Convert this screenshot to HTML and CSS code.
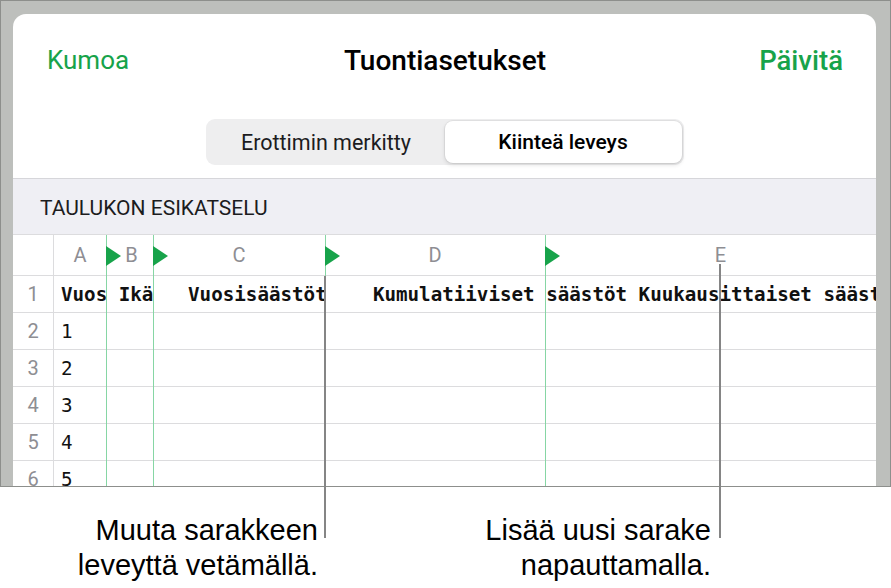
FILE: index.html
```html
<!doctype html>
<html lang="fi">
<head>
  <meta charset="utf-8">
  <title>Tuontiasetukset</title>
  <link rel="stylesheet" href="styles.css">
</head>
<body>
  <div class="page">
    <div class="device">
      <div class="sheet">
        <header class="nav">
          <span class="nav-btn">Kumoa</span>
          <h1 class="nav-title">Tuontiasetukset</h1>
          <span class="nav-btn done">Päivitä</span>
        </header>
        <div class="seg-wrap">
          <div class="segmented">
            <button class="seg">Erottimin merkitty</button>
            <button class="seg active">Kiinteä leveys</button>
          </div>
        </div>
        <div class="section-head">TAULUKON ESIKATSELU</div>
        <div class="preview">
          <div class="row head">
            <div class="num"></div>
            <div class="letters">
              <span class="col col-a">A</span>
              <span class="col col-b">B</span>
              <span class="col col-c">C</span>
              <span class="col col-d">D</span>
              <span class="col col-e">E</span>
            </div>
          </div>
          <div class="row"><div class="num">1</div><div class="text bold">Vuos Ikä   Vuosisäästöt    Kumulatiiviset säästöt Kuukausittaiset säästöt</div></div>
          <div class="row"><div class="num">2</div><div class="text">1</div></div>
          <div class="row"><div class="num">3</div><div class="text">2</div></div>
          <div class="row"><div class="num">4</div><div class="text">3</div></div>
          <div class="row"><div class="num">5</div><div class="text">4</div></div>
          <div class="row"><div class="num">6</div><div class="text">5</div></div>
          <!-- column breaks -->
          <span class="marker m1"></span>
          <span class="marker m2"></span>
          <span class="marker m3"></span>
          <span class="marker m4"></span>
        </div>
      </div>
    </div>
    <div class="notes">
      <p class="note note-drag">Muuta sarakkeen<br>leveyttä vetämällä.</p>
      <p class="note note-add">Lisää uusi sarake<br>napauttamalla.</p>
    </div>
    <span class="leader leader-drag"></span>
    <span class="leader leader-add"></span>
  </div>
</body>
</html>
```

FILE: styles.css
```css
:root {
  --green: #17a34a;
  --frame: #bdbfbc;
  --grid: #dcdcde;
  --muted: #8e8e93;
  --mono: 'DejaVu Sans Mono', 'Liberation Mono', monospace;
}
* { box-sizing: border-box; margin: 0; padding: 0; }
body {
  background: #fff;
  font-family: Roboto, 'Liberation Sans', sans-serif;
  color: #111;
}
.page {
  position: relative;
  width: 891px;
  height: 588px;
  overflow: hidden;
}
/* Device frame */
.device {
  background: var(--frame);
  border: 1px solid #8d8f8c;
  padding: 13px 14px 0 12px;
}
.sheet {
  background: #fff;
  height: 472px;
  border-radius: 13px 13px 0 0;
  overflow: hidden;
  display: flex;
  flex-direction: column;
}
/* Nav bar */
.nav {
  height: 92px;
  display: grid;
  grid-template-columns: 1fr auto 1fr;
  align-items: center;
  padding: 0 33px 0 34px;
}
.nav-btn {
  font-size: 26px;
  color: var(--green);
}
.nav-btn.done {
  justify-self: end;
  font-size: 27.5px;
  font-weight: 500;
}
.nav-title {
  font-size: 28px;
  font-weight: 500;
  color: #000;
}
/* Segmented control */
.seg-wrap {
  display: flex;
  justify-content: center;
  padding: 13px 0;
  border-bottom: 1px solid #d6d6da;
}
.segmented {
  width: 478px;
  height: 46px;
  display: grid;
  grid-template-columns: 1fr 1fr;
  padding: 2px;
  background: #eeeeef;
  border-radius: 9px;
}
.seg {
  font: inherit;
  font-size: 21.5px;
  color: #1c1c1e;
  background: none;
  border: none;
  border-radius: 8px;
}
.seg.active {
  background: #fff;
  font-size: 21px;
  font-weight: 500;
  color: #000;
  box-shadow: 0 0 0 1px rgba(0,0,0,0.05), 0 2px 4px rgba(0,0,0,0.12);
}
/* Section header */
.section-head {
  height: 55px;
  display: flex;
  align-items: center;
  padding: 2px 27px 0;
  background: #efeff4;
  font-size: 21px;
  color: #1c1c1e;
}
/* Preview table */
.preview {
  position: relative;
  flex: 1;
  border-top: 1px solid var(--grid);
  overflow: hidden;
}
.row {
  display: flex;
  height: 37px;
  border-bottom: 1px solid var(--grid);
}
.row.head {
  height: 41px;
}
.num {
  width: 41px;
  flex: none;
  border-right: 1px solid var(--grid);
  display: flex;
  align-items: center;
  justify-content: center;
  font-size: 20px;
  color: var(--muted);
}
.text {
  padding-left: 7px;
  display: flex;
  align-items: center;
  white-space: pre;
  font-family: var(--mono);
  font-size: 19.2px;
  color: #111;
}
.text.bold {
  font-weight: 700;
}
.letters {
  flex: 1;
  display: flex;
}
.col {
  display: flex;
  align-items: center;
  justify-content: center;
  font-size: 20px;
  color: var(--muted);
}
.col-a { width: 52px; }
.col-b { width: 47px; padding-left: 4px; }
.col-c { width: 172px; }
.col-d { width: 220px; }
.col-e { flex: 1; padding-left: 20px; }
/* Fixed-width column breaks */
.marker {
  position: absolute;
  top: 0;
  bottom: 0;
  width: 1px;
  background: #86d6a4;
}
.marker::after {
  content: "";
  position: absolute;
  top: 11px;
  left: 0;
  border-left: 15px solid var(--green);
  border-top: 10px solid transparent;
  border-bottom: 10px solid transparent;
}
.m1 { left: 93px; }
.m2 { left: 140px; }
.m3 { left: 312px; }
.m4 { left: 532px; }
/* Callouts */
.notes {
  display: flex;
  margin-top: 26px;
}
.note {
  text-align: right;
  font-family: 'Liberation Sans', sans-serif;
  font-size: 29px;
  line-height: 35px;
  color: #000;
}
.note-drag { width: 318px; }
.note-add { width: 393px; }
.leader {
  position: absolute;
  width: 2px;
  background: #858585;
}
.leader-drag {
  left: 324px;
  top: 276px;
  height: 262px;
}
.leader-add {
  left: 719px;
  top: 264px;
  height: 274px;
}
```
